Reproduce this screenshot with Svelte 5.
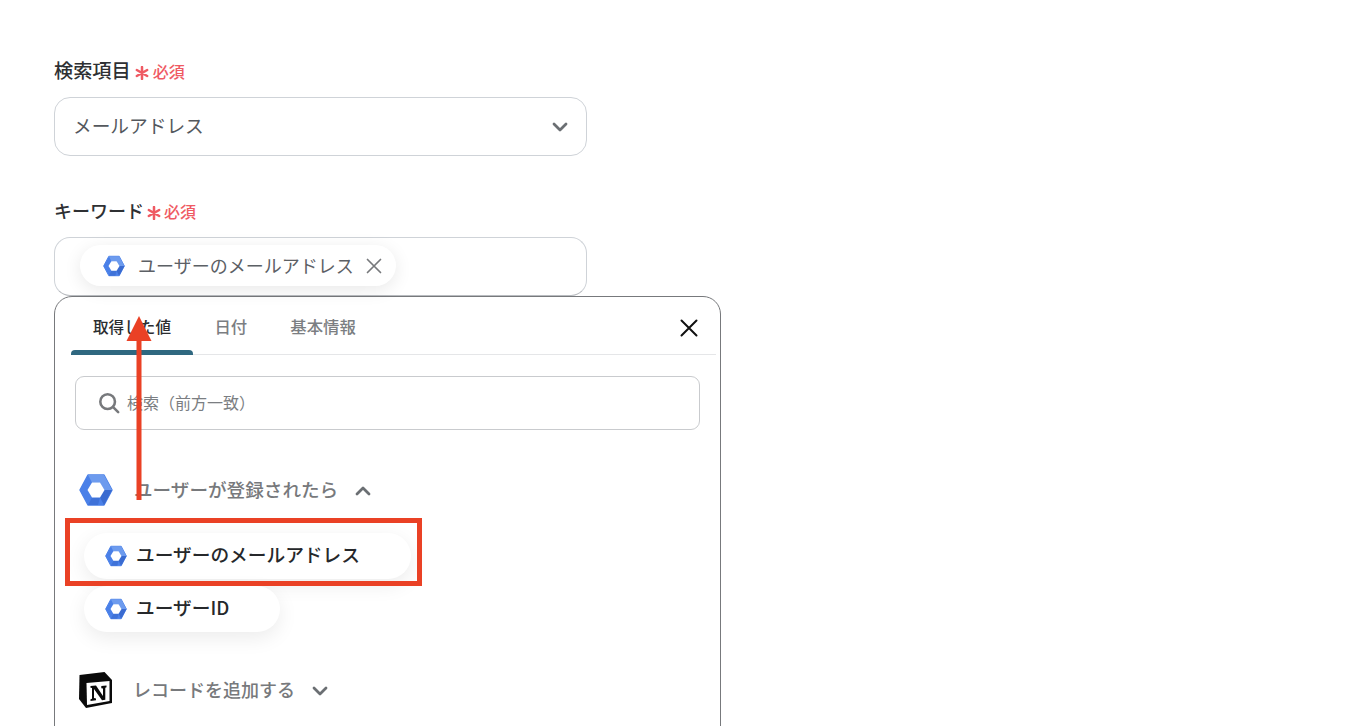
<script>
  const tabs = ["取得した値", "日付", "基本情報"];
  const values = ["ユーザーのメールアドレス", "ユーザーID"];
</script>

{#snippet cloudIcon(size)}
  <svg class="hex" width={size} height={size} viewBox="0 0 34 34">
    <path d="M9 2h16L33 17l-8 15H9L1 17z" fill="#4a80e8" stroke="#4a80e8" stroke-width="1.500" stroke-linejoin="round" />
    <path d="M9 2h16L33 17h-7.500L21 9.500h-8z" fill="#6d9bee" />
    <path d="M25 32 33 17h-7.500L21 24.500z" fill="#3a6bd0" />
    <path d="M9 32H19L21 24.500h-8z" fill="#3f72d8" />
    <path d="M13 9.500h8L25.500 17 21 24.500h-8L8.500 17z" fill="#fff" />
  </svg>
{/snippet}

{#snippet star()}
  <svg class="star" width="14" height="14" viewBox="0 0 14 14">
    <path d="M7 1v12M1.800 4 12.200 10M12.200 4 1.800 10" stroke="#ef5a63" stroke-width="2.500" stroke-linecap="round" />
  </svg>
{/snippet}

<main class="page">
  <div class="field">
    <div class="label">
      <span class="label-text">検索項目</span>{@render star()}<span class="req">必須</span>
    </div>
    <div class="control select">
      <span>メールアドレス</span>
      <svg width="16" height="10" viewBox="0 0 16 10">
        <path d="M2 2l6 6 6-6" fill="none" stroke="#6b6f73" stroke-width="2.800" stroke-linecap="round" stroke-linejoin="round" />
      </svg>
    </div>
  </div>

  <div class="field second">
    <div class="label">
      <span class="label-text narrow">キーワード</span>{@render star()}<span class="req">必須</span>
    </div>
    <div class="control tag-control">
      <div class="tag">
        {@render cloudIcon(22)}
        <span>ユーザーのメールアドレス</span>
        <svg width="16" height="16" viewBox="0 0 16 16">
          <path d="M1.500 1.500l13 13M14.500 1.500l-13 13" stroke="#77797c" stroke-width="1.700" stroke-linecap="round" />
        </svg>
      </div>
    </div>
  </div>

  <section class="panel">
    <div class="tabs">
      {#each tabs as tab, i}
        <div class="tab" class:active={i === 0}>{tab}</div>
      {/each}
      <svg class="close" width="18" height="18" viewBox="0 0 18 18">
        <path d="M1.500 1.500l15 15M16.500 1.500l-15 15" stroke="#111" stroke-width="2" stroke-linecap="round" />
      </svg>
    </div>

    <div class="search">
      <svg width="22" height="22" viewBox="0 0 24 24">
        <circle cx="10.500" cy="10.500" r="8" fill="none" stroke="#77797c" stroke-width="2.800" />
        <path d="M16.500 16.500l5.500 5.500" stroke="#77797c" stroke-width="2.800" stroke-linecap="round" />
      </svg>
      <span>検索（前方一致）</span>
    </div>

    <div class="group first">
      {@render cloudIcon(34)}
      <span class="group-title">ユーザーが登録されたら</span>
      <svg width="16" height="10" viewBox="0 0 16 10">
        <path d="M2 8l6-6 6 6" fill="none" stroke="#6b6f73" stroke-width="2.800" stroke-linecap="round" stroke-linejoin="round" />
      </svg>
    </div>

    <div class="values">
      {#each values as value}
        <div class="value">
          {@render cloudIcon(22)}
          <span>{value}</span>
        </div>
      {/each}
    </div>

    <div class="group">
      <svg class="notion" width="34" height="36" viewBox="0 0 34 36">
        <path d="M.5 3 25.500 0 33 8V31L7 36 0 27z" fill="#0a0a0a" />
        <path d="M7.500 11 30.500 9V29L8 33z" fill="#fff" />
        <path d="M11.500 14 17 13.500 24 24V16.500L22.300 16.200V14L27.500 13.500V15.300L26.300 15.800V27.800L23 28.300 15 17V26L17 26.500V28.300L11.500 29V27.200L13 26.700V16L11.500 15.800z" fill="#0a0a0a" />
      </svg>
      <span class="group-title">レコードを追加する</span>
      <svg width="16" height="10" viewBox="0 0 16 10">
        <path d="M2 2l6 6 6-6" fill="none" stroke="#6b6f73" stroke-width="2.800" stroke-linecap="round" stroke-linejoin="round" />
      </svg>
    </div>
  </section>

  <!-- annotation drawn on top of the screenshot -->
  <div class="highlight"></div>
  <svg class="arrow" width="28" height="185" viewBox="0 0 28 185">
    <path d="M14 0 26.500 25H16.500V184H11.500V25H1.500z" fill="#ea4125" />
  </svg>
</main>

<style>
  :global(body) {
    margin: 0;
    background: #fff;
  }

  .page {
    position: relative;
    height: 726px;
    box-sizing: border-box;
    padding: 58px 0 0 54px;
    overflow: hidden;
    font-family: "Noto Sans CJK JP", "Noto Sans", sans-serif;
    color: #2b2d30;
  }

  .field {
    width: 533px;
  }

  .second {
    margin-top: 42px;
  }

  .label {
    display: flex;
    align-items: center;
    height: 27px;
    margin-bottom: 12px;
    font-size: 19.200px;
    font-weight: 500;
    color: #2e3033;
  }

  .label-text {
    margin-bottom: 3px;
  }

  .narrow {
    font-size: 18px;
    margin-right: -1px;
  }

  .star {
    margin: 3px 0 0 4px;
    flex: none;
  }

  .req {
    margin: 0 0 1px 4px;
    font-size: 16px;
    color: #ef5a63;
  }

  .narrow ~ .req {
    margin-left: 3px;
  }

  .control {
    box-sizing: border-box;
    height: 59px;
    border: 1px solid #cfd3d8;
    border-radius: 16px;
    display: flex;
    align-items: center;
  }

  .select {
    justify-content: space-between;
    padding: 0 18px 0 18px;
    font-size: 18.700px;
    color: #54585d;
  }

  .select span {
    margin-bottom: 4px;
  }

  .tag-control {
    padding: 0 0 2px 25px;
    border-bottom-color: #b9bcc0;
  }

  .tag {
    height: 41px;
    display: flex;
    align-items: center;
    padding: 0 14px 0 23px;
    border-radius: 21px;
    background: #fff;
    box-shadow: 0 4px 18px rgba(0, 0, 0, 0.09);
    font-size: 18px;
    color: #5c6065;
  }

  .tag span {
    margin: 0 12px 2px 13px;
    white-space: nowrap;
  }

  .panel {
    box-sizing: border-box;
    width: 667px;
    height: 500px;
    padding: 0 4px 0 16px;
    border: 1px solid #77797c;
    border-radius: 18px;
    background: #fff;
  }

  .tabs {
    position: relative;
    display: flex;
    height: 58px;
    box-sizing: border-box;
    border-bottom: 1px solid #e5e6e8;
  }

  .tab {
    padding: 0 21.500px;
    line-height: 58px;
    font-size: 16.400px;
    font-weight: 500;
    color: #7b7e82;
  }

  .tab.active {
    position: relative;
    height: 58px;
    box-sizing: border-box;
    padding: 0 22px;
    font-size: 15.600px;
    color: #2b2d30;
  }

  .tab.active::after {
    content: "";
    position: absolute;
    left: 0;
    right: 0;
    bottom: 0;
    height: 5px;
    border-radius: 4px 4px 0 0;
    background: #2f6880;
  }

  .close {
    position: absolute;
    right: 18px;
    top: 22px;
  }

  .search {
    box-sizing: border-box;
    height: 54px;
    margin: 21px 16px 0 4px;
    padding-left: 22px;
    display: flex;
    align-items: center;
    gap: 7px;
    border: 1px solid #c9cbce;
    border-radius: 9px;
    font-size: 16px;
    color: #7b7e82;
  }

  .search span {
    margin-bottom: 2px;
  }

  .group {
    display: flex;
    align-items: center;
    padding-left: 8px;
    height: 36px;
    font-size: 18px;
    font-weight: 500;
    color: #77797c;
  }

  .group.first {
    margin-top: 42px;
  }

  .group.first .group-title {
    margin: 0 17px 4px 21px;
    font-size: 18.600px;
  }

  .group-title {
    margin: 0 17px 2px 20px;
    white-space: nowrap;
  }

  .group svg:last-child {
    margin-top: 2px;
  }

  .values {
    margin: 25px 0 40px 13px;
    display: flex;
    flex-direction: column;
    align-items: flex-start;
    gap: 7px;
  }

  .value {
    height: 46px;
    display: flex;
    align-items: center;
    gap: 9px;
    padding: 0 51px 0 21px;
    border-radius: 23px;
    background: #fff;
    box-shadow: 0 6px 20px rgba(0, 0, 0, 0.08);
    font-size: 18.700px;
    font-weight: 500;
    color: #26282b;
  }

  .value span {
    margin-bottom: 6px;
  }

  .highlight {
    position: absolute;
    left: 65px;
    top: 518px;
    width: 357px;
    height: 68px;
    box-sizing: border-box;
    border: 5px solid #ea4125;
  }

  .arrow {
    position: absolute;
    left: 125px;
    top: 316px;
  }
</style>
